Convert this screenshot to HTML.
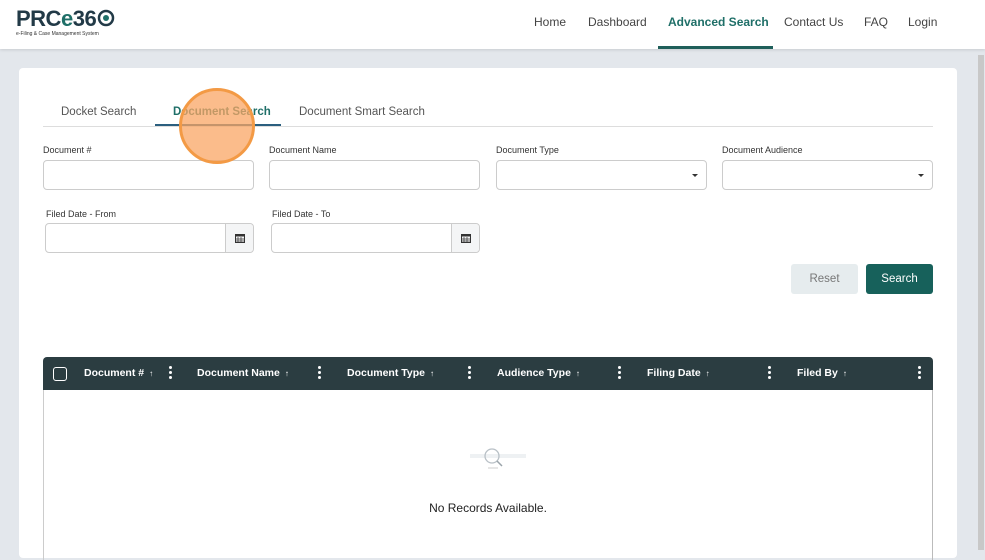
<!DOCTYPE html>
<html><head><meta charset="utf-8"><style>
*{box-sizing:border-box;margin:0;padding:0}
body{width:985px;height:550px;overflow:hidden;background:#e3e7ec;font-family:"Liberation Sans",sans-serif;position:relative;color:#333}
.hdr{position:absolute;left:0;top:0;width:985px;height:49px;background:#fff;box-shadow:0 1px 3px rgba(0,0,0,.12)}
.logo{position:absolute;left:16px;top:8px;font-weight:bold;font-size:22px;color:#223a47;letter-spacing:-0.5px;line-height:22px}
.logo .e{color:#1f6f68}
.tag{position:absolute;left:16px;top:31px;font-size:5px;color:#333}
.nav{position:absolute;top:15px;font-size:12px;color:#444}
.navbar{position:absolute;left:658px;top:46px;width:115px;height:3px;background:#1f5f5a}
.card{position:absolute;left:19px;top:68px;width:938px;height:490px;background:#fff;border-radius:4px}
.sb{position:absolute;left:978px;top:55px;width:6px;height:495px;background:#c8c8c8}
.tab{position:absolute;top:106px;font-size:11.5px;color:#555}
.tabline{position:absolute;left:43px;top:126px;width:890px;height:1px;background:#ddd}
.tabact{position:absolute;left:155px;top:124px;width:126px;height:2px;background:#2b5f7f}
.lbl{position:absolute;font-size:9px;color:#333}
.inp{position:absolute;height:30px;border:1px solid #ccc;border-radius:4px;background:#fff}
.caret{position:absolute;right:8px;top:13px;width:0;height:0;border-left:3px solid transparent;border-right:3px solid transparent;border-top:3px solid #333}
.cal{position:absolute;right:0;top:0;width:28px;height:100%;background:#f4f5f6;border-left:1px solid #ccc;border-radius:0 4px 4px 0}
.btn{position:absolute;top:264px;width:67px;height:30px;border-radius:3px;font-size:11.5px;text-align:center;line-height:30px}
.th{position:absolute;left:43px;top:357px;width:890px;height:33px;background:#2b3d41;border-radius:4px 4px 0 0}
.tc{position:absolute;top:10px;font-size:10.5px;font-weight:bold;color:#fff}
.tc .a{font-size:8px;margin-left:5px;font-weight:normal}
.dots{position:absolute;top:9px;width:3px;height:14px}
.dots i{display:block;width:3px;height:3px;background:#fff;border-radius:50%;margin-bottom:2px}
.tbody{position:absolute;left:43px;top:390px;width:890px;height:170px;border-left:1px solid #ccc;border-right:1px solid #bbb}
.circ{position:absolute;left:179px;top:88px;width:76px;height:76px;border-radius:50%;background:rgba(250,165,100,.75);border:3px solid #f39a45}
</style></head><body>
<div class="hdr">
<div class="logo">PRC<span class="e">e</span>36<svg width="20" height="20" viewBox="0 0 20 20" style="vertical-align:-2px"><circle cx="10" cy="10" r="7" fill="none" stroke="#223a47" stroke-width="2.5"/><circle cx="10" cy="10" r="3" fill="#1f6f68"/></svg></div>
<div class="tag">e-Filing &amp; Case Management System</div>
<div class="nav" style="left:534px">Home</div>
<div class="nav" style="left:588px">Dashboard</div>
<div class="nav" style="left:668px;color:#1f6f68;font-weight:bold">Advanced Search</div>
<div class="nav" style="left:784px">Contact Us</div>
<div class="nav" style="left:864px">FAQ</div>
<div class="nav" style="left:908px">Login</div>
<div class="navbar"></div>
</div>
<div class="sb"></div>
<div class="card"></div>
<div class="tab" style="left:61px">Docket Search</div>
<div class="tab" style="left:173px;color:#1f6f68;font-weight:bold">Document Search</div>
<div class="tab" style="left:299px">Document Smart Search</div>
<div class="tabline"></div><div class="tabact"></div>

<div class="lbl" style="left:43px;top:145px">Document #</div>
<div class="lbl" style="left:269px;top:145px">Document Name</div>
<div class="lbl" style="left:496px;top:145px">Document Type</div>
<div class="lbl" style="left:722px;top:145px">Document Audience</div>
<div class="inp" style="left:43px;top:160px;width:211px"></div>
<div class="inp" style="left:269px;top:160px;width:211px"></div>
<div class="inp" style="left:496px;top:160px;width:211px"><div class="caret"></div></div>
<div class="inp" style="left:722px;top:160px;width:211px"><div class="caret"></div></div>

<div class="lbl" style="left:46px;top:209px">Filed Date - From</div>
<div class="lbl" style="left:272px;top:209px">Filed Date - To</div>
<div class="inp" style="left:45px;top:223px;width:209px"><div class="cal"><svg width="10" height="10" viewBox="0 0 10 10" style="margin:9px"><rect x="0.5" y="1.5" width="9" height="8" fill="none" stroke="#333"/><rect x="0.5" y="1.5" width="9" height="2" fill="#333"/><path d="M3 4v5M6 4v5M1 6h8M1 8h8" stroke="#333" stroke-width=".7"/></svg></div></div>
<div class="inp" style="left:271px;top:223px;width:209px"><div class="cal"><svg width="10" height="10" viewBox="0 0 10 10" style="margin:9px"><rect x="0.5" y="1.5" width="9" height="8" fill="none" stroke="#333"/><rect x="0.5" y="1.5" width="9" height="2" fill="#333"/><path d="M3 4v5M6 4v5M1 6h8M1 8h8" stroke="#333" stroke-width=".7"/></svg></div></div>

<div class="btn" style="left:791px;background:#e6ecee;color:#777">Reset</div>
<div class="btn" style="left:866px;background:#17615b;color:#fff">Search</div>

<div class="th">
<div style="position:absolute;left:10px;top:10px;width:14px;height:14px;border:1.5px solid #fff;border-radius:3px"></div>
<div class="tc" style="left:41px">Document #<span class="a">↑</span></div>
<div class="dots" style="left:126px"><i></i><i></i><i></i></div>
<div class="tc" style="left:154px">Document Name<span class="a">↑</span></div>
<div class="dots" style="left:275px"><i></i><i></i><i></i></div>
<div class="tc" style="left:304px">Document Type<span class="a">↑</span></div>
<div class="dots" style="left:425px"><i></i><i></i><i></i></div>
<div class="tc" style="left:454px">Audience Type<span class="a">↑</span></div>
<div class="dots" style="left:575px"><i></i><i></i><i></i></div>
<div class="tc" style="left:604px">Filing Date<span class="a">↑</span></div>
<div class="dots" style="left:725px"><i></i><i></i><i></i></div>
<div class="tc" style="left:754px">Filed By<span class="a">↑</span></div>
<div class="dots" style="left:875px"><i></i><i></i><i></i></div>
</div>
<div class="tbody">
<svg width="60" height="24" viewBox="0 0 60 24" style="position:absolute;left:424px;top:55px"><rect x="2" y="9" width="56" height="4" fill="#eef1f3"/><circle cx="24" cy="11" r="7" fill="none" stroke="#b8c0c6" stroke-width="1.3"/><path d="M29 16l5 5" stroke="#9aa3aa" stroke-width="1.5"/><path d="M20 23h10" stroke="#ccc"/></svg>
<div style="position:absolute;left:0;width:888px;top:111px;text-align:center;font-size:12px;color:#222;font-family:'Liberation Sans',Arial,sans-serif">No Records Available.</div>
</div>
<div class="circ"></div>
</body></html>
